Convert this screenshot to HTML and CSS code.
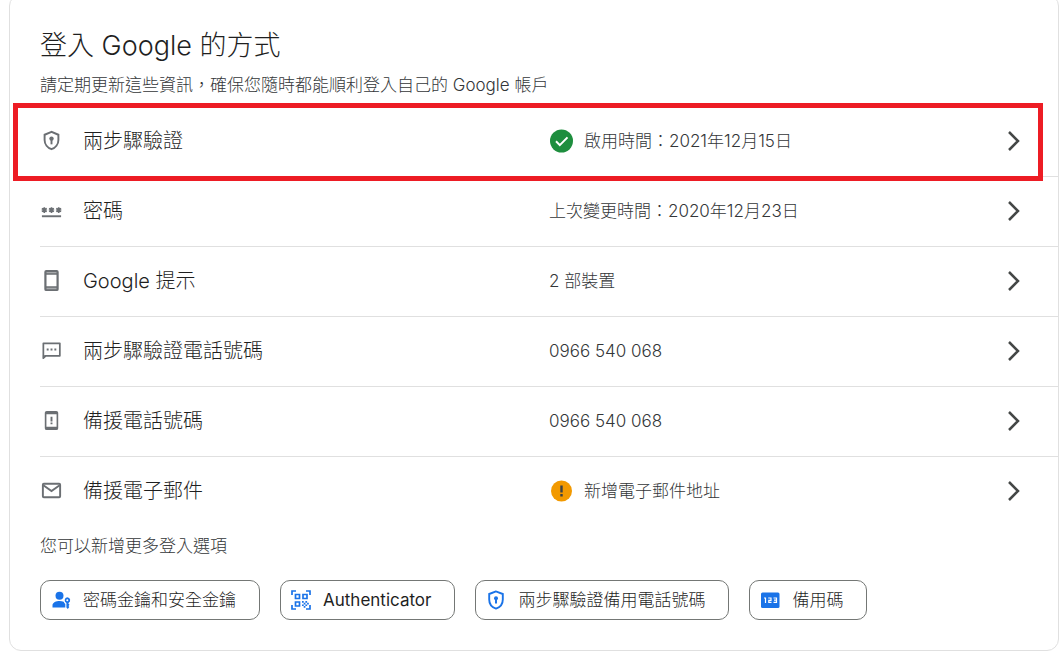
FILE: index.html
```html
<!DOCTYPE html>
<html lang="zh-Hant">
<head>
<meta charset="utf-8">
<meta name="viewport" content="width=device-width, initial-scale=1">
<title>登入 Google 的方式</title>
<link rel="stylesheet" href="styles.css">
</head>
<body>
<main class="card">
  <header class="card-header">
    <h1 class="title">登入 Google 的方式</h1>
    <p class="subtitle">請定期更新這些資訊，確保您隨時都能順利登入自己的 Google 帳戶</p>
  </header>

  <ul class="rows">
    <li class="row-item">
      <a class="row row-highlight" href="#two-step">
        <span class="row-label">
          <svg class="icon" viewBox="0 0 24 24" aria-hidden="true"><path fill="none" stroke="currentColor" stroke-width="2" d="M12 3 4.800 6v5.500c0 4.300 3 8.200 7.200 9.500 4.200-1.300 7.200-5.200 7.200-9.500V6z"/><circle cx="12" cy="10" r="2.300" fill="currentColor"/><path fill="currentColor" d="M11 11h2v5h-2z"/></svg>
          兩步驟驗證
        </span>
        <span class="row-value">
          <svg class="badge-icon" viewBox="0 0 24 24" aria-hidden="true"><circle cx="12.500" cy="12" r="11.500" fill="#1e8e3e"/><path fill="none" stroke="#fff" stroke-width="2" d="m7 12.300 3.800 3.800 7.700-7.700"/></svg>
          啟用時間：2021年12月15日
        </span>
        <svg class="chevron" viewBox="0 0 14 22" aria-hidden="true"><path d="m2 2 9 9-9 9"/></svg>
      </a>
    </li>
    <li class="row-item">
      <a class="row" href="#password">
        <span class="row-label">
          <svg class="icon" viewBox="0 0 24 24" aria-hidden="true"><path fill="currentColor" d="M2 17h20v2H2z"/><g fill="none" stroke="currentColor" stroke-width="1.800"><path id="star" d="M4.500 8.500v6M1.900 10l5.200 3M7.100 10l-5.200 3"/><use href="#star" x="7.500"/><use href="#star" x="15"/></g></svg>
          密碼
        </span>
        <span class="row-value">上次變更時間：2020年12月23日</span>
        <svg class="chevron" viewBox="0 0 14 22" aria-hidden="true"><path d="m2 2 9 9-9 9"/></svg>
      </a>
    </li>
    <li class="row-item">
      <a class="row" href="#prompt">
        <span class="row-label">
          <svg class="icon" viewBox="0 0 24 24" aria-hidden="true"><path fill="currentColor" fill-rule="evenodd" d="M6.500 1h11a2 2 0 0 1 2 2v18a2 2 0 0 1-2 2h-11a2 2 0 0 1-2-2V3a2 2 0 0 1 2-2zm.300 5v12h10.400V6z"/><path fill="#fff" opacity=".4" d="M6.800 3h10.400v1.500H6.800zm0 16.500h10.400V21H6.800z"/></svg>
          Google 提示
        </span>
        <span class="row-value">2 部裝置</span>
        <svg class="chevron" viewBox="0 0 14 22" aria-hidden="true"><path d="m2 2 9 9-9 9"/></svg>
      </a>
    </li>
    <li class="row-item">
      <a class="row" href="#two-step-phone">
        <span class="row-label">
          <svg class="icon" viewBox="0 0 24 24" aria-hidden="true"><path fill="none" stroke="currentColor" stroke-width="1.800" stroke-linejoin="round" d="M3.500 20V4.500h17.200v13H6z"/><path fill="currentColor" d="M3 17h4l-4 4zM7 10h2v2H7zm4 0h2v2h-2zm4 0h2v2h-2z"/></svg>
          兩步驟驗證電話號碼
        </span>
        <span class="row-value">0966 540 068</span>
        <svg class="chevron" viewBox="0 0 14 22" aria-hidden="true"><path d="m2 2 9 9-9 9"/></svg>
      </a>
    </li>
    <li class="row-item">
      <a class="row" href="#recovery-phone">
        <span class="row-label">
          <svg class="icon" viewBox="0 0 24 24" aria-hidden="true"><path fill="currentColor" fill-rule="evenodd" d="M7 2h10a2 2 0 0 1 2 2v16a2 2 0 0 1-2 2H7a2 2 0 0 1-2-2V4a2 2 0 0 1 2-2zm-.300 3.500v13h10.600v-13z"/><path fill="currentColor" d="M11 8h2v5h-2zm0 6h2v2h-2z"/></svg>
          備援電話號碼
        </span>
        <span class="row-value">0966 540 068</span>
        <svg class="chevron" viewBox="0 0 14 22" aria-hidden="true"><path d="m2 2 9 9-9 9"/></svg>
      </a>
    </li>
    <li class="row-item">
      <a class="row" href="#recovery-email">
        <span class="row-label">
          <svg class="icon" viewBox="0 0 24 24" aria-hidden="true"><g fill="none" stroke="currentColor" stroke-width="2"><rect x="3" y="5" width="18" height="14" rx="1"/><path d="m3.500 6.500 8.500 6 8.500-6"/></g></svg>
          備援電子郵件
        </span>
        <span class="row-value">
          <svg class="badge-icon" viewBox="0 0 24 24" aria-hidden="true"><circle cx="12.500" cy="12" r="10.500" fill="#f29900"/><path fill="#3c4043" d="M11.300 6.500h2.400v7h-2.400zm0 8.500h2.400v2.400h-2.400z"/></svg>
          新增電子郵件地址
        </span>
        <svg class="chevron" viewBox="0 0 14 22" aria-hidden="true"><path d="m2 2 9 9-9 9"/></svg>
      </a>
    </li>
  </ul>

  <section class="more">
    <p class="more-text">您可以新增更多登入選項</p>
    <div class="chips">
      <button class="chip" type="button">
        <svg class="chip-icon" viewBox="0 0 20 20" aria-hidden="true"><g fill="currentColor"><circle cx="8.500" cy="5.800" r="4"/><path d="M1.500 17.500v-2.200c0-2.700 3.800-4.200 7-4.200 1.600 0 3 .3 4.200.7.300 1 .9 1.800 1.600 2.300v3.400z"/><path fill-rule="evenodd" d="M16.300 7.200a3 3 0 0 1 1.200 5.700v.8l1 1.100-1 1.200.8 1-1.500 2-1.400-1.500v-4.600a3 3 0 0 1 .9-5.700zm0 2a1 1 0 1 0 0 2 1 1 0 0 0 0-2z"/></g></svg>
        密碼金鑰和安全金鑰
      </button>
      <button class="chip chip-latin" type="button">
        <svg class="chip-icon" viewBox="0 0 20 20" aria-hidden="true"><g fill="none" stroke="currentColor" stroke-width="1.700"><path d="M1 5V1h4M15 1h4v4M1 15v4h4M15 19h4v-4M4.500 4.500h4v4h-4zM12 4.500h4v4h-4zM4.500 12h4v4h-4z"/></g><path fill="currentColor" d="M11 11h1.700v1.700H11zm3.400 0h1.700v1.700h-1.700zm-1.700 1.700h1.700v1.700h-1.700zm3.400 0h1.700v1.700h-1.700zM11 14.400h1.700v1.700H11zm3.400 0h1.700v1.700h-1.700zm-1.700 1.700h1.700v1.700h-1.700z"/></svg>
        Authenticator
      </button>
      <button class="chip" type="button">
        <svg class="chip-icon" viewBox="0 0 20 20" aria-hidden="true"><path fill="none" stroke="currentColor" stroke-width="1.900" d="M10 1.400 3.200 4v5.500c0 4.200 2.800 7.800 6.800 9.100 4-1.300 6.800-4.900 6.800-9.100V4z"/><circle cx="10" cy="8.200" r="2" fill="currentColor"/><path fill="currentColor" d="M9 9h2v4.500H9z"/></svg>
        兩步驟驗證備用電話號碼
      </button>
      <button class="chip" type="button">
        <svg class="chip-icon" viewBox="0 0 20 20" aria-hidden="true"><rect x="1" y="2.500" width="18.500" height="15.500" rx="1.500" fill="currentColor"/><path fill="none" stroke="#fff" stroke-width="1.200" d="M4 8h1.500v5M8.200 8H11v2.400H8.800v2h2.700M13.500 8h3v4.400h-3M14 10.200h2.500"/></svg>
        備用碼
      </button>
    </div>
  </section>
</main>
</body>
</html>
```
FILE: styles.css
```css
* {
  box-sizing: border-box;
}

body {
  margin: 0;
  background: #fff;
  color: #1f1f1f;
  font-family: Inter, "Noto Sans CJK TC", sans-serif;
  font-size: 17px;
  font-weight: 300;
  line-height: 26px;
}

h1,
p,
ul {
  margin: 0;
  padding: 0;
  font-weight: inherit;
}

.card {
  margin: -6px 4px 7px 9px;
  padding: 33px 0 30px 30px;
  border: 1px solid #e0e0e0;
  border-radius: 12px;
}

.card-header {
  display: flex;
  flex-direction: column;
  gap: 8px;
  padding-bottom: 9px;
}

.title {
  font-size: 27px;
  line-height: 36px;
}

.subtitle,
.more-text {
  color: #333638;
}

.rows {
  list-style: none;
}

.row-item + .row-item {
  border-top: 1px solid #e0e0e0;
}

.row {
  position: relative;
  display: grid;
  grid-template-columns: 1fr 1fr;
  align-items: center;
  height: 69px;
  padding-bottom: 2px;
  color: inherit;
  text-decoration: none;
}

.row-label {
  display: flex;
  align-items: center;
  gap: 20px;
  grid-area: 1 / 1;
  font-size: 20px;
}

.row-value {
  display: flex;
  align-items: center;
  gap: 11px;
  grid-area: 1 / 2;
  color: #333638;
}

.row-highlight::after {
  content: "";
  position: absolute;
  inset: -4px 15px -5px -27px;
  border: 5px solid #ed1c24;
  z-index: 1;
  pointer-events: none;
}

.icon {
  flex: none;
  width: 23px;
  height: 23px;
  color: #6b6f73;
}

.badge-icon {
  flex: none;
  width: 24px;
  height: 24px;
}

.chevron {
  grid-area: 1 / 2;
  justify-self: end;
  width: 14px;
  height: 22px;
  margin-right: 37px;
  fill: none;
  stroke: #444746;
  stroke-width: 2.500;
}

.more {
  padding-top: 7px;
}

.chips {
  display: flex;
  flex-wrap: wrap;
  gap: 20px;
  padding-top: 21px;
}

.chip {
  display: flex;
  align-items: center;
  gap: 12px;
  height: 40px;
  padding: 0 23px 0 10px;
  border: 1px solid #747775;
  border-radius: 10px;
  background: #fff;
  color: #1f1f1f;
  font: inherit;
}

.chip-latin {
  font-weight: 400;
}

.chip-icon {
  flex: none;
  width: 20px;
  height: 20px;
  color: #1a73e8;
}
```
